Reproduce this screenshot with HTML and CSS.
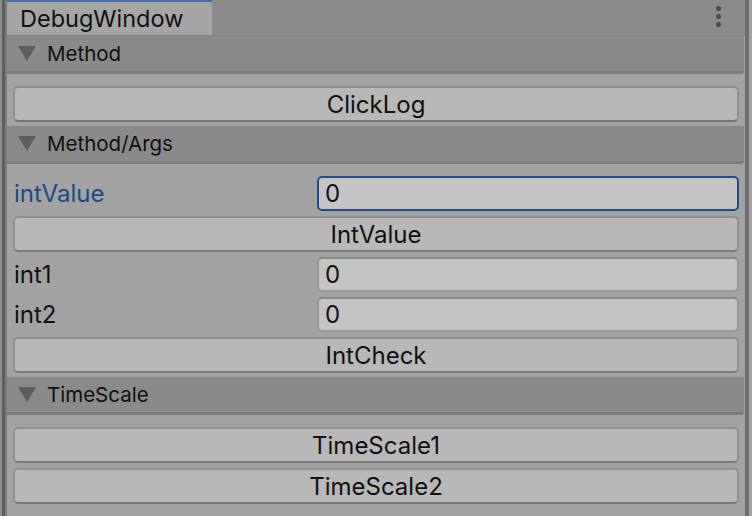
FILE: index.html
```html
<!Doctype html>
<html>
    <head>
        <link rel="stylesheet" href="styles.css">
        <title>DebugWindow</title>
    </head>
    <body>
        <div class="frame">
            <div class="edge-left"></div>
            <div class="window">
                <div class="tab-bar">
                    <div class="tab">DebugWindow</div>
                    <div class="menu-dots">
                        <span></span><span></span><span></span>
                    </div>
                </div>

                <div class="foldout">
                    <span class="arrow"></span>
                    <span class="foldout-title">Method</span>
                </div>
                <div class="section">
                    <button class="unity-button">ClickLog</button>
                </div>

                <div class="foldout">
                    <span class="arrow"></span>
                    <span class="foldout-title">Method/Args</span>
                </div>
                <div class="section">
                    <div class="field-row">
                        <label class="field-label is-focused">intValue</label>
                        <input class="int-field is-focused" value="0">
                    </div>
                    <button class="unity-button">IntValue</button>
                    <div class="field-row">
                        <label class="field-label">int1</label>
                        <input class="int-field" value="0">
                    </div>
                    <div class="field-row">
                        <label class="field-label">int2</label>
                        <input class="int-field" value="0">
                    </div>
                    <button class="unity-button">IntCheck</button>
                </div>

                <div class="foldout">
                    <span class="arrow"></span>
                    <span class="foldout-title">TimeScale</span>
                </div>
                <div class="section">
                    <button class="unity-button">TimeScale1</button>
                    <button class="unity-button">TimeScale2</button>
                </div>
            </div>
            <div class="edge-right"></div>
        </div>
    </body>
</html>
```

FILE: styles.css
```css
body {
    margin: 0;
    font-family: Inter, "Noto Sans", sans-serif;
    background-color: #a2a2a2;
    color: #101010;
}

.frame {
    display: flex;
    height: 516px;
    overflow: hidden;
}

.edge-left {
    width: 7px;
    background: linear-gradient(to right, #8c8c8c 0, #8c8c8c 2px, #5e5e5e 2px, #5e5e5e 5px, #7a7a7a 5px);
}

.edge-right {
    width: 7px;
    background: linear-gradient(to right, #6e6e6e 0, #6e6e6e 4px, #a4a4a4 4px);
}

.window {
    flex: 1;
    background-color: #a2a2a2;
}

.tab-bar {
    height: 35px;
    background-color: #8b8b8b;
    display: flex;
    align-items: flex-end;
    justify-content: space-between;
    border-bottom: 1px solid #858585;
}

.tab {
    width: 205px;
    height: 35px;
    box-sizing: border-box;
    background-color: #a5a5a5;
    border-top: 2px solid #3a6cb0;
    font-size: 23.5px;
    line-height: 33px;
    padding-left: 13px;
}

.menu-dots {
    align-self: flex-start;
    display: flex;
    flex-direction: column;
    gap: 3px;
    padding-top: 6px;
    margin-right: 24px;
}

.menu-dots span {
    width: 5px;
    height: 5px;
    border-radius: 50%;
    background-color: #4a4a4a;
}

.foldout {
    height: 35px;
    background-color: #8a8a8a;
    border-bottom: 3px solid #7c7c7c;
    margin-right: 1px;
    display: flex;
    align-items: center;
    padding-left: 11px;
    border-radius: 0 0 3px 0;
}

.arrow {
    width: 0;
    height: 0;
    border-left: 9px solid transparent;
    border-right: 9px solid transparent;
    border-top: 15px solid #5e5e5e;
    margin-right: 11px;
}

.foldout-title {
    font-size: 20.5px;
}

.section {
    padding: 12px 6px 4px 6px;
    display: flex;
    flex-direction: column;
    gap: 5px;
}

.unity-button {
    height: 36px;
    font-family: Inter, "Noto Sans", sans-serif;
    font-size: 24px;
    color: #101010;
    background-color: #b8b8b8;
    border: 2px solid #909090;
    border-bottom-color: #7a7a7a;
    border-radius: 5px;
    padding: 0;
}

.field-row {
    height: 35px;
    display: flex;
    align-items: center;
}

.field-label {
    width: 303px;
    padding-left: 1px;
    font-size: 24px;
}

.field-label.is-focused {
    color: #1d4a86;
}

.int-field {
    flex: 1;
    height: 35px;
    box-sizing: border-box;
    font-family: Inter, "Noto Sans", sans-serif;
    font-size: 24px;
    color: #101010;
    background-color: #c4c4c4;
    border: 2px solid #979797;
    border-top-color: #8a8a8a;
    border-radius: 5px;
    padding: 0 0 0 6px;
    outline: none;
}

.int-field.is-focused {
    border-color: #244f86;
}
```
